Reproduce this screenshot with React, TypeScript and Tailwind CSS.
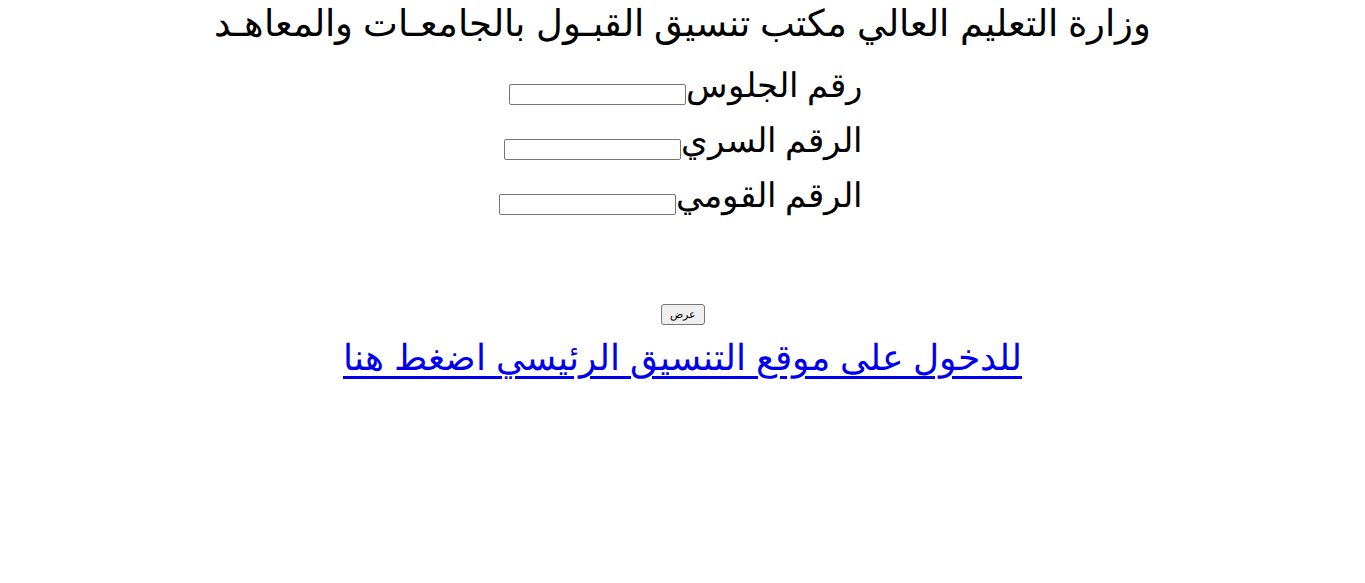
export default function App() {
  return (
    <div dir="rtl" className="w-[1365px] h-[583px] bg-white text-black text-center" style={{ fontFamily: '"Liberation Sans", Arial, sans-serif' }}>
      <div className="text-[37px] leading-[48px] h-[52px] whitespace-nowrap">وزارة التعليم العالي مكتب تنسيق القبـول بالجامعـات والمعاهـد</div>
      <div className="flex justify-center">
        <div className="w-[360px] flex flex-col text-right">
          {["رقم الجلوس", "الرقم السري", "الرقم القومي"].map((t) => (
            <div key={t} className="h-[55px] flex items-end text-[34px] leading-[44px] whitespace-nowrap">
              <span className="shrink-0">{t}</span>
              <input className="shrink-0 mb-[2px] w-[177px] h-[21px] border border-[#767676] rounded-[2px]" />
            </div>
          ))}
        </div>
      </div>
      <div className="h-[87px]" />
      <div className="flex justify-center">
        <button className="w-[44px] h-[21px] border border-[#767676] rounded-[3px] bg-[#efefef] text-[11px]" style={{ fontFamily: 'Arial, sans-serif' }}>عرض</button>
      </div>
      <div className="text-[36px] leading-[66px] h-[56px] whitespace-nowrap">
        <a href="#" className="text-[#0000ee] underline decoration-[3px] underline-offset-[6px]">للدخول على موقع التنسيق الرئيسي اضغط هنا</a>
      </div>
    </div>
  );
}
